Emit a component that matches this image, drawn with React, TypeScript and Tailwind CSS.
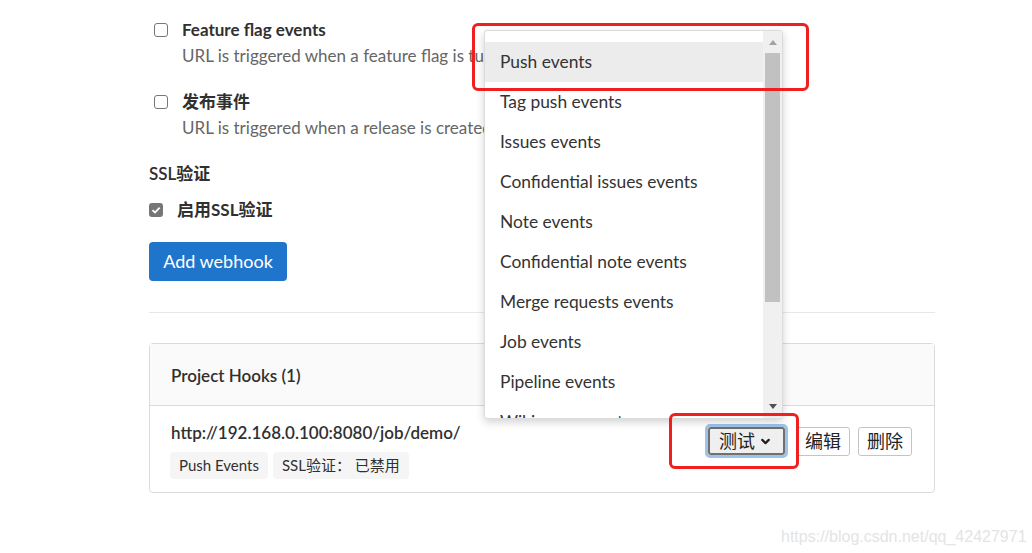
import { ChevronDown } from "lucide-react";

const events = [
  "Push events",
  "Tag push events",
  "Issues events",
  "Confidential issues events",
  "Note events",
  "Confidential note events",
  "Merge requests events",
  "Job events",
  "Pipeline events",
  "Wiki page events",
];

const font = "font-['Lato','Noto_Sans_CJK_SC',sans-serif]";

function Box({ checked }: { checked?: boolean }) {
  if (checked) {
    return (
      <span className="flex h-[14px] w-[14px] items-center justify-center rounded-[3px] bg-[#767676]">
        <svg width="10" height="10" viewBox="0 0 10 10">
          <path d="M1.5 5.2 4 7.5 8.6 2.6" fill="none" stroke="#fff" strokeWidth="1.8" />
        </svg>
      </span>
    );
  }
  return <span className="block h-[14px] w-[14px] rounded-[3px] border border-[#767676] bg-white" />;
}

function EventOption({ title, desc }: { title: string; desc: string }) {
  return (
    <div className="flex">
      <div className="ml-[5px] mr-[14px] pt-[6px]">
        <Box />
      </div>
      <div>
        <div className="text-[17px] font-bold leading-[26px] text-[#303030]">{title}</div>
        <div className="text-[17px] leading-[26px] text-[#666]">{desc}</div>
      </div>
    </div>
  );
}

export default function App() {
  return (
    <div className={`relative h-[553px] w-[1032px] overflow-hidden bg-white ${font}`}>
      <div className="ml-[149px] w-[786px] pt-[17px]">
        <div className="flex flex-col gap-[20px]">
          <EventOption title="Feature flag events" desc="URL is triggered when a feature flag is turned on or off" />
          <EventOption title="发布事件" desc="URL is triggered when a release is created" />
        </div>

        <div className="mt-[20px] text-[17px] font-semibold leading-[26px] text-[#303030]">SSL验证</div>
        <div className="mt-[10px] flex items-center">
          <Box checked />
          <span className="ml-[14px] text-[17px] font-bold leading-[26px] text-[#303030]">启用SSL验证</span>
        </div>

        <button className="mt-[19px] flex h-[39px] w-[138px] items-center justify-center rounded-[4px] bg-[#1f75cb] text-[18px] text-white">
          Add webhook
        </button>

        <div className="mt-[31px] h-px bg-[#e8e8e8]" />

        <div className="mt-[30px] rounded-[4px] border border-[#dbdbdb]">
          <div className="flex h-[62px] items-center border-b border-[#dbdbdb] bg-[#fafafa] px-[21px] pt-[2px] text-[17px] font-semibold text-[#303030]">
            Project Hooks (1)
          </div>
          <div className="flex items-start justify-between pl-[20px] pr-[21px] pt-[16px] pb-[13px]">
            <div>
              <div className="pl-[1px] text-[17px] font-semibold leading-[22px] text-[#303030]">
                http://192.168.0.100:8080/job/demo/
              </div>
              <div className="mt-[8px] flex gap-[5px] text-[15px] text-[#303030]">
                <span className="rounded-[4px] bg-[#f5f5f5] px-[9px] leading-[27px]">Push Events</span>
                <span className="rounded-[4px] bg-[#f5f5f5] px-[9px] leading-[27px]">SSL验证： 已禁用</span>
              </div>
            </div>
            <div className="mr-[1px] mt-[2px] flex items-center gap-[8px] text-[18px] text-[#222]">
              <span className="rounded-[5px] border-[3px] border-[#9ec3ea]">
                <span className="flex h-[28px] items-center gap-[4px] rounded-[3px] border-2 border-[#707070] bg-[#efefef] pl-[9px] pr-[11px]">
                  测试
                  <ChevronDown size={13} strokeWidth={4} />
                </span>
              </span>
              <span className="flex h-[29px] items-center rounded-[3px] border border-[#c4c4c4] bg-white px-[8px]">编辑</span>
              <span className="flex h-[29px] items-center rounded-[3px] border border-[#c4c4c4] bg-white px-[8px]">删除</span>
            </div>
          </div>
        </div>
      </div>

      {/* dropdown list overlay */}
      <div className="absolute left-[484px] top-[30px] flex h-[389px] w-[299px] overflow-hidden rounded-[3px] border border-[#dcdcdc] bg-white shadow-[0_3px_8px_rgba(0,0,0,0.18)]">
        <div className="flex-1 pt-[11px]">
          {events.map((e, i) => (
            <div
              key={e}
              className={`flex h-[40px] items-center pl-[15px] text-[17.4px] text-[#333] ${i === 0 ? "bg-[#ececec]" : ""}`}
            >
              {e}
            </div>
          ))}
        </div>
        <div className="flex w-[19px] flex-col items-center bg-[#f0f0f0]">
          <svg width="10" height="22" viewBox="0 0 10 22" className="shrink-0">
            <path d="M1 14 5 9 9 14Z" fill="#a3a3a3" />
          </svg>
          <div className="h-[249px] w-[15px] bg-[#c1c1c1]" />
          <div className="flex-1" />
          <svg width="10" height="22" viewBox="0 0 10 22" className="shrink-0">
            <path d="M1 8 5 13 9 8Z" fill="#505050" />
          </svg>
        </div>
      </div>

      {/* red highlight boxes */}
      <div className="absolute left-[472px] top-[23px] h-[68px] w-[337px] rounded-[6px] border-[3px] border-[#f01f1f]" />
      <div className="absolute left-[669px] top-[413px] h-[56px] w-[130px] rounded-[6px] border-[3px] border-[#f01f1f]" />

      <div className="absolute left-[781px] top-[525px] font-['Liberation_Sans',sans-serif] text-[16px] text-[#e4e4e4]">
        https://blog.csdn.net/qq_42427971
      </div>
    </div>
  );
}
